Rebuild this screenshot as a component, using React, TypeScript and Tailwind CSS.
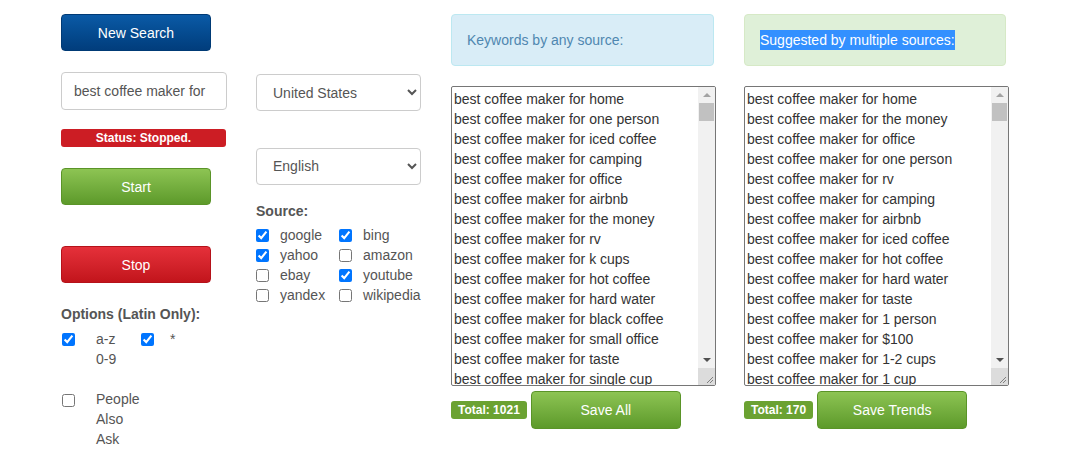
import { useState } from "react";

const anyKeywords = [
  "home", "one person", "iced coffee", "camping", "office", "airbnb", "the money", "rv",
  "k cups", "hot coffee", "hard water", "black coffee", "small office", "taste", "single cup",
].map((s) => `best coffee maker for ${s}`);

const trendKeywords = [
  "home", "the money", "office", "one person", "rv", "camping", "airbnb", "iced coffee",
  "hot coffee", "hard water", "taste", "1 person", "$100", "1-2 cups", "1 cup",
].map((s) => `best coffee maker for ${s}`);

const sources: { name: string; on: boolean }[][] = [
  [{ name: "google", on: true }, { name: "bing", on: true }],
  [{ name: "yahoo", on: true }, { name: "amazon", on: false }],
  [{ name: "ebay", on: false }, { name: "youtube", on: true }],
  [{ name: "yandex", on: false }, { name: "wikipedia", on: false }],
];

const btn =
  "w-[150px] h-[37px] rounded-[4px] text-white text-[14px] flex items-center justify-center border pt-px";
const greenBtn = `${btn} bg-gradient-to-b from-[#8dc453] to-[#5d9a2a] border-[#5a9428]`;

function Check({ on }: { on: boolean }) {
  return <input type="checkbox" defaultChecked={on} className="w-[13px] h-[13px] m-0 shrink-0" />;
}

// classic scrollbar with resize grip, drawn next to the list
function ScrollBar() {
  return (
    <div className="w-[17px] flex flex-col bg-[#f1f1f1] shrink-0">
      <div className="h-[16px] flex items-center justify-center">
        <div className="w-0 h-0 border-x-[4px] border-x-transparent border-b-[4px] border-b-[#a3a3a3]" />
      </div>
      <div className="h-[18px] mx-[1px] bg-[#c1c1c1]" />
      <div className="flex-1" />
      <div className="h-[16px] flex items-center justify-center">
        <div className="w-0 h-0 border-x-[4px] border-x-transparent border-t-[4px] border-t-[#505050]" />
      </div>
      <div className="h-[17px] bg-[#dcdcdc] flex items-end justify-end">
        <svg width="17" height="17" viewBox="0 0 17 17">
          <path d="M15 9 L9 15 M15 12 L12 15" stroke="#808080" strokeWidth="1" />
        </svg>
      </div>
    </div>
  );
}

function KeywordList({ items }: { items: string[] }) {
  return (
    <div className="w-[265px] h-[300px] border border-[#767676] rounded-[2px] flex overflow-hidden">
      <div className="flex-1 overflow-hidden px-[2px] pt-[2px] text-[14px] leading-[20px] text-[#333] whitespace-nowrap">
        {items.map((k) => (
          <div key={k}>{k}</div>
        ))}
      </div>
      <ScrollBar />
    </div>
  );
}

function SaveRow({ total, label }: { total: number; label: string }) {
  return (
    <div className="mt-[5px] flex items-center">
      <span className="h-[18px] px-[7px] rounded-[3px] bg-[#6ba232] text-white text-[12px] font-bold flex items-center">
        Total: {total}
      </span>
      <button className={`${greenBtn} ml-[4px] h-[38px]`}>{label}</button>
    </div>
  );
}

export default function App() {
  const [query, setQuery] = useState("best coffee maker for");

  return (
    <div className="w-[1073px] h-[466px] bg-white flex pl-[61px] pt-[14px] overflow-hidden font-['Liberation_Sans',Arial,sans-serif] text-[#555]">
      {/* controls */}
      <div className="w-[166px] flex flex-col">
        <button className={`${btn} bg-gradient-to-b from-[#0b5aa6] to-[#013d7c] border-[#003a75]`}>
          New Search
        </button>
        <input
          value={query}
          onChange={(e) => setQuery(e.target.value)}
          className="mt-[21px] w-[166px] h-[38px] border border-[#ccc] rounded-[4px] px-[12px] text-[14px] text-[#555] outline-none"
        />
        <div className="mt-[19px] w-[165px] h-[18px] rounded-[3px] bg-[#cc1d24] text-white text-[12px] font-bold flex items-center justify-center">
          Status: Stopped.
        </div>
        <button className={`${greenBtn} mt-[21px]`}>Start</button>
        <button className={`${btn} mt-[41px] bg-gradient-to-b from-[#e5303a] to-[#c2141b] border-[#b5121a]`}>
          Stop
        </button>
        <div className="mt-[21px] text-[14px] font-bold leading-[20px]">Options (Latin Only):</div>
        <div className="mt-[5px] flex items-start text-[14px] leading-[20px]">
          <div className="h-[20px] flex items-center pl-px">
            <Check on />
          </div>
          <div className="ml-[21px] w-[45px]">
            a-z
            <br />
            0-9
          </div>
          <div className="h-[20px] flex items-center">
            <Check on />
          </div>
          <div className="ml-[16px]">*</div>
        </div>
        <div className="mt-[20px] flex items-start text-[14px] leading-[20px]">
          <div className="h-[20px] flex items-center pl-px mt-px">
            <Check on={false} />
          </div>
          <div className="ml-[21px]">
            People
            <br />
            Also
            <br />
            Ask
          </div>
        </div>
      </div>

      {/* region, language and sources */}
      <div className="ml-[29px] w-[165px] flex flex-col pt-[60px]">
        <select className="w-[165px] h-[37px] border border-[#ccc] rounded-[4px] pl-[12px] pr-[6px] text-[14px] text-[#555] bg-white outline-none">
          <option>United States</option>
        </select>
        <select className="mt-[37px] w-[165px] h-[37px] border border-[#ccc] rounded-[4px] pl-[12px] pr-[6px] pb-px text-[14px] text-[#555] bg-white outline-none">
          <option>English</option>
        </select>
        <div className="mt-[16px] text-[14px] font-bold leading-[20px]">Source:</div>
        <div className="mt-[4px] flex flex-col text-[14px] leading-[20px]">
          {sources.map((row) => (
            <div key={row[0].name} className="flex items-center h-[20px]">
              <div className="w-[83px] flex items-center">
                <Check on={row[0].on} />
                <span className="ml-[11px]">{row[0].name}</span>
              </div>
              <div className="flex items-center">
                <Check on={row[1].on} />
                <span className="ml-[11px]">{row[1].name}</span>
              </div>
            </div>
          ))}
        </div>
      </div>

      {/* all keywords */}
      <div className="ml-[30px] w-[265px] flex flex-col">
        <div className="w-[263px] h-[52px] rounded-[4px] border border-[#bce8f1] bg-[#d9edf7] text-[#4f87b0] text-[14px] flex items-center pl-[15px]">
          Keywords by any source:
        </div>
        <div className="mt-[20px]">
          <KeywordList items={anyKeywords} />
        </div>
        <SaveRow total={1021} label="Save All" />
      </div>

      {/* trending keywords */}
      <div className="ml-[28px] w-[265px] flex flex-col">
        <div className="w-[262px] h-[52px] rounded-[4px] border border-[#d6e9c6] bg-[#dff0d8] text-[14px] flex items-center pl-[15px]">
          <span className="bg-[#3390ff] text-white leading-[20px]">Suggested by multiple sources:</span>
        </div>
        <div className="mt-[20px]">
          <KeywordList items={trendKeywords} />
        </div>
        <SaveRow total={170} label="Save Trends" />
      </div>
    </div>
  );
}
